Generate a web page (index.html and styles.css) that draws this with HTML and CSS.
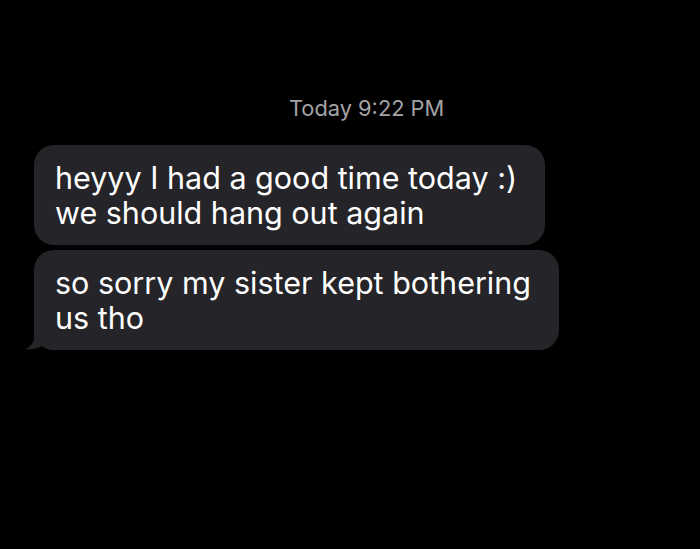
FILE: index.html
```html
<!DOCTYPE html>
<html>

<head>
    <link rel="stylesheet" href="styles.css">
</head>

<body>
    <section class="thread">
        <p class="stamp">Today 9:22 PM</p>
        <div class="bubble">heyyy I had a good time today :)<br>we should hang out again</div>
        <div class="bubble last">so sorry my sister kept bothering<br>us tho
            <svg class="tail" width="30" height="24" viewBox="0 0 30 24">
                <path d="M10 0 V12 C10 17 6 21 1 23.5 C8 24 14 22.5 18 19.5 C22 22.5 26 24 30 24 V0 Z" fill="#252428"></path>
            </svg>
        </div>
    </section>
</body>

</html>
```

FILE: styles.css
```css
body {
    margin: 0;
    background: #000;
    font-family: Inter, "Liberation Sans", sans-serif;
}

.thread {
    display: flex;
    flex-direction: column;
    align-items: flex-start;
    gap: 5px;
    padding: 0 0 0 34px;
    height: 549px;
    box-sizing: border-box;
}

.stamp {
    margin: 95px 0 19px 255px;
    color: #a3a3a6;
    font-size: 21.8px;
    line-height: 26px;
}

.bubble {
    position: relative;
    background: #252428;
    color: #fff;
    font-size: 30.5px;
    line-height: 35px;
    padding: 15px 28px 15px 21px;
    border-radius: 20px;
}

.tail {
    position: absolute;
    left: -10px;
    bottom: 0;
}
```
